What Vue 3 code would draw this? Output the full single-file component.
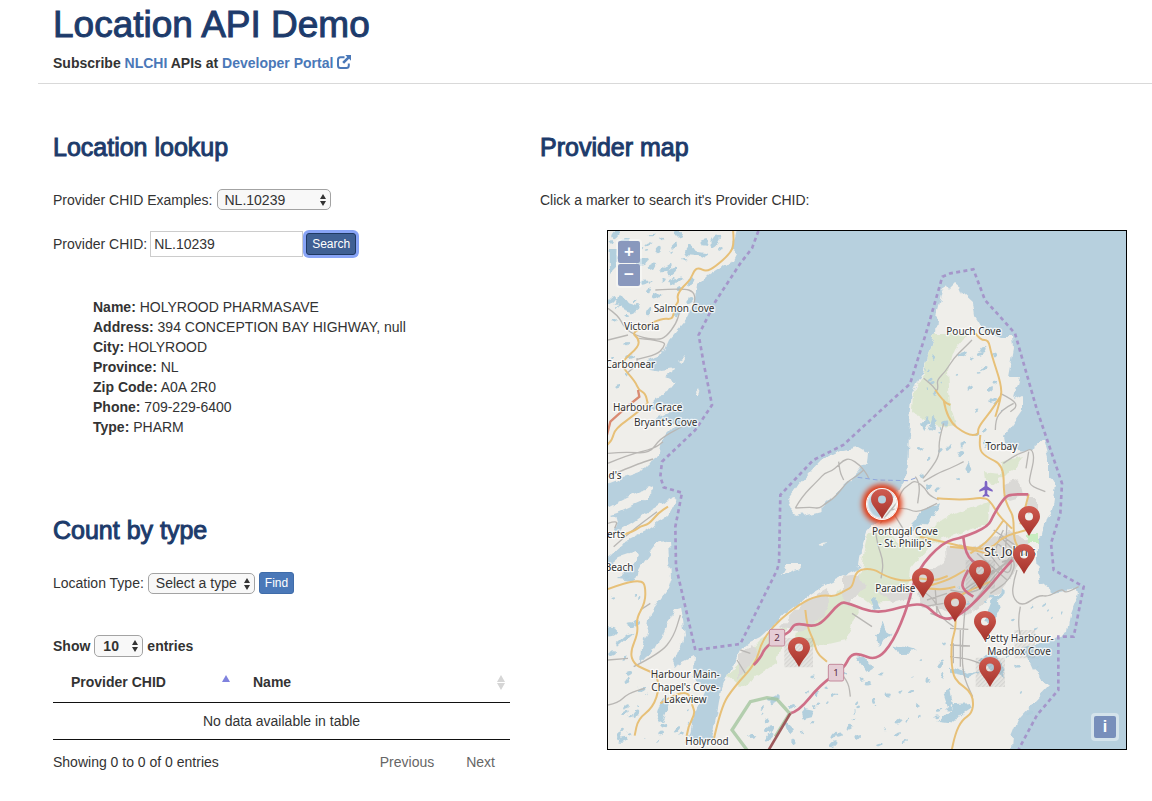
<script setup>
import { ref } from 'vue'

const example = ref('NL.10239')
const chid = ref('NL.10239')
const locationType = ref('Select a type')
const pageSize = ref('10')

const details = [
  ['Name', 'HOLYROOD PHARMASAVE'],
  ['Address', '394 CONCEPTION BAY HIGHWAY, null'],
  ['City', 'HOLYROOD'],
  ['Province', 'NL'],
  ['Zip Code', 'A0A 2R0'],
  ['Phone', '709-229-6400'],
  ['Type', 'PHARM'],
]

// Marker tips, in map units of a 518 x 518 view.
const markers = [
  { x: 274, y: 288, active: true },
  { x: 421, y: 305 },
  { x: 416, y: 343 },
  { x: 372, y: 359 },
  { x: 315, y: 367 },
  { x: 347, y: 391 },
  { x: 377, y: 410 },
  { x: 382, y: 456 },
  { x: 191, y: 436 },
]
const markerStyle = (m) => ({ left: (m.x / 518) * 100 + '%', top: (m.y / 518) * 100 + '%' })

const labels = [
  { x: 231, y: 247, t: 'Salmon Cove' },
  { x: 104, y: 301, t: 'Victoria' },
  { x: 70, y: 414, t: 'Carbonear' },
  { x: 122, y: 543, t: 'Harbour Grace' },
  { x: 176, y: 588, t: "Bryant's Cove" },
  { x: 24, y: 746, t: "d's" },
  { x: 27, y: 924, t: 'erts' },
  { x: 36, y: 1024, t: 'Beach' },
  { x: 235, y: 1344, t: 'Harbour Main-' },
  { x: 235, y: 1382, t: "Chapel's Cove-" },
  { x: 235, y: 1420, t: 'Lakeview' },
  { x: 300, y: 1544, t: 'Holyrood' },
  { x: 1100, y: 315, t: 'Pouch Cove' },
  { x: 1183, y: 660, t: 'Torbay' },
  { x: 894, y: 914, t: 'Portugal Cove' },
  { x: 894, y: 952, t: "- St. Philip's" },
  { x: 865, y: 1087, t: 'Paradise' },
  { x: 1236, y: 1236, t: 'Petty Harbour-' },
  { x: 1236, y: 1274, t: 'Maddox Cove' },
]

// Rounds the corners of polylines written with M, L, l, h and v commands.
function smooth(d) {
  const tokens = d.match(/[MLlhv]|-?\d+/g)
  const lines = []
  let cmd = 'M'
  let x = 0
  let y = 0
  for (let i = 0; i < tokens.length; ) {
    if (/[a-z]/i.test(tokens[i])) cmd = tokens[i++]
    if (cmd === 'h') x += +tokens[i++]
    else if (cmd === 'v') y += +tokens[i++]
    else if (cmd === 'l') {
      x += +tokens[i++]
      y += +tokens[i++]
    } else {
      x = +tokens[i++]
      y = +tokens[i++]
    }
    if (cmd === 'M') {
      lines.push([])
      cmd = 'l'
    }
    lines[lines.length - 1].push([x, y])
    if (cmd === 'h' || cmd === 'v') cmd = /[a-z]/i.test(tokens[i] || 'M') ? cmd : 'l'
  }
  return lines
    .map((p) => {
      let out = `M${p[0]}`
      for (let i = 1; i < p.length - 1; i++) {
        out += `Q${p[i]} ${(p[i][0] + p[i + 1][0]) / 2},${(p[i][1] + p[i + 1][1]) / 2}`
      }
      return out + `L${p[p.length - 1]}`
    })
    .join('')
}

const minorRoads = smooth(
  'M3 235l30 20 20 40 40 25 60 10 25 -10 30 -40 10 -35M145 180l85 -5 30 10 5 25 -10 25M3 330l60 -15M95 325l80 8 -5 20 -20 20 -60 15M60 430l30 -25 0 -20' +
  'M3 670l50 -5 75 6 30 -45 65 -35M3 700l60 -25 80 -20 25 -20M3 740l80 -35 55 -18M3 880l30 -10 -10 25M20 950l50 -45 80 -60' +
  'M3 1290l60 -5M3 1425l30 -5 30 -30 50 -15M80 1310l80 -40 40 -50 20 -65M100 1140l30 -20M390 1290l25 40M400 1260l30 10' +
  'M565 834l20 -35 50 -50 18 -20 20 -5 20 -17 15 -15 20 -7 30 20 20 25 7 15M565 834l50 -3 20 5 20 -15 30 -20 35 -45 25 -15 24 -20M695 695l3 30 12 25' +
  'M950 445l25 20 15 20 3 -15 -3 -20 25 -25 25 -40 30 -30 25 -25' +
  'M820 880l30 -40 20 -20 15 -40 20 -15 20 -15 30 25 10 20 30 15M925 740l15 20 -8 60M850 840l40 -10 40 20 60 -30M860 850l30 50 15 20M950 755l40 -25 40 -15 40 -20M1010 580l-15 50 3 45 -25 40 -25 30M805 900l5 40 20 55 -8 50' +
  'M1180 490l40 20 10 20 -20 15M1165 600l0 -30 20 -30 35 -20M1189 700l35 -25 30 -10 20 -10 8 30 -12 50 -5 30 50 20M1265 665l-8 50' +
  'M1189 900l-30 60 20 30M1170 940l60 40 -20 70 -60 40M1140 960l60 90 20 -60 -50 10 90 -30M1110 970l90 80M1060 1100l160 -120M1030 1080l80 20 50 -80M1080 1140l130 -160M1160 1020l-90 60M1130 1050l110 -80M1180 920l60 60M1200 880l-5 90M1160 900l70 50' +
  'M1230 1020l-10 30 -5 50 30 30 50 -35 30 5 40 -25 10 15 40 -20M1240 1130l-8 40 10 60M1075 1130l-8 80 -2 120 32 70M1029 1195l55 3M1060 1200l0 110M1029 1245l60 3M1029 1280l50 5 40 15' +
  'M940 1080l40 20 20 60 40 30M960 1110l60 -20M970 1150l60 20M710 1340l15 20 5 40M735 1150l60 40M1039 1240l0 60M950 1130l60 -10M985 1080l5 70'
)
const mainRoads = smooth(
  'M378 0l4 40 -12 30 -45 40 -28 15 -22 -12 -13 7 -12 30 -22 20 -18 25 5 20 -10 10 -5 25 -5 18 -30 -3 -55 25 -35 20 20 15 0 25 -45 40 -5 20 40 45 10 25 20 10 7 30M122 520l-32 30 -65 45 -10 35 -15 15' +
  'M50 914l30 -10 20 -15 25 -6 30 -35 28 -18M3 1077l55 -20 45 -5 12 15 0 50 -28 50 7 40 -25 60 12 35 30 15 35 15 12 40 -20 60 -45 35 -10 50M160 1420l40 -25 45 -10 10 40 10 25 -22 40 -7 50' +
  'M320 1530l22 -100 40 -60 65 -70 15 -60 35 -50 50 -45 60 -40 45 -10 30 5 35 -20 20 -10 10 -50 50 -5 40 25 60 15 35 -12 50 10 40 -15' +
  'M595 1140l5 50 20 40 10 40 30 25M985 480l25 35 20 10M1010 510l10 60 60 45 35 0 -3 -22 40 -50 28 -43' +
  'M1105 310l15 20 25 0 7 40 33 100 -5 40 -15 50M1120 615l-5 40 20 25 55 25 0 90 15 40 15 25 0 70 20 30M990 805l70 6 75 -10 20 20 20 35 20 20 20 20M938 920l70 15 60 15 80 10 40 -40 70 -20M1265 793l-10 40 -15 50M1029 950l60 5 60 20M1030 1110l60 -30 60 -25' +
  'M1045 1160l3 30 -16 50 3 90 20 30 30 20 15 30 -5 40 -30 20 -20 40 -15 70M955 1075l50 5 40 -10M955 1070l60 -15 60 -35M1190 870l-40 60 -60 40'
)
const motorways = smooth(
  'M440 1305L460 1285L475 1250L534 1212L549 1205L564 1178L619 1190L649 1175L699 1116L724 1120L809 1152L904 1125L954 1122L989 1158L1029 1170L1079 1140L1139 1080L1180 1030L1216 990' +
  'M549 1450L574 1445L639 1365L711 1315L729 1276L754 1270L809 1292L859 1235L904 1125L929 1021L1009 935L1069 922L1144 890L1159 855L1194 800L1215 793L1264 793' +
  'M1069 922L1074 975L1119 1010M1084 1020L1064 1055L1069 1080L1099 1100'
)

let seed = 11
const rnd = () => (seed = (seed * 16807) % 2147483647) / 2147483647
// Regions where ponds are scattered: x, y, width, height, count, size.
const regions = [
  [10, 10, 330, 60, 22, 11], [10, 60, 240, 190, 30, 13], [10, 250, 60, 240, 8, 9],
  [10, 1040, 90, 500, 22, 12], [100, 1360, 160, 190, 14, 9], [410, 1400, 100, 130, 10, 13],
  [540, 1310, 220, 240, 22, 9], [740, 1240, 290, 310, 30, 8], [1180, 1130, 150, 330, 12, 8],
  [930, 560, 130, 260, 14, 10], [1040, 330, 150, 240, 16, 11], [1040, 560, 120, 120, 8, 10],
  [1010, 1060, 160, 80, 7, 8], [1260, 1110, 120, 90, 5, 7], [950, 380, 90, 120, 8, 8],
]
const ponds = regions.flatMap(([x, y, w, h, n, s]) =>
  Array.from({ length: n }, () => {
    const cx = x + rnd() * w
    const cy = y + rnd() * h
    const r = s * (0.35 + rnd())
    return { cx, cy, rx: r, ry: r * 0.55, a: `rotate(${-60 + rnd() * 60} ${cx} ${cy})` }
  })
)
</script>

<template>
  <div class="page">
    <header class="masthead">
      <h1>Location API Demo</h1>
      <p>
        Subscribe <a href="#">NLCHI</a> APIs at
        <a href="#">Developer Portal
          <svg class="ext" viewBox="0 0 14 14" aria-hidden="true">
            <path d="M7.5 2.200H3.500Q1 2.200 1 4.700V10.500Q1 13 3.500 13H9.300Q11.800 13 11.800 10.500V8.500" fill="none" stroke="currentColor" stroke-width="2" />
            <path d="M8.300 0H14v5.700l-1.900-1.900-5 5-1.900-1.900 5-5z" fill="currentColor" />
          </svg>
        </a>
      </p>
    </header>

    <div class="columns">
      <div class="left">
        <section class="lookup">
          <h2>Location lookup</h2>
          <div class="line">
            <label for="ex">Provider CHID Examples:</label>
            <span class="pick wide">
              <select id="ex" v-model="example"><option>NL.10239</option></select>
              <svg viewBox="0 0 8 14" aria-hidden="true"><path d="M4 1l3 5H1zM4 13l3-5H1z" /></svg>
            </span>
          </div>
          <form class="line search" @submit.prevent>
            <label for="chid">Provider CHID:</label>
            <input id="chid" v-model="chid" type="text" />
            <button class="btn focused" type="submit">Search</button>
          </form>
          <ul class="details">
            <li v-for="d in details" :key="d[0]"><b>{{ d[0] }}:</b> {{ d[1] }}</li>
          </ul>
        </section>

        <section>
          <h2>Count by type</h2>
          <form class="line type" @submit.prevent>
            <label for="lt">Location Type:</label>
            <span class="pick medium">
              <select id="lt" v-model="locationType"><option>Select a type</option></select>
              <svg viewBox="0 0 8 14" aria-hidden="true"><path d="M4 1l3 5H1zM4 13l3-5H1z" /></svg>
            </span>
            <button class="btn" type="submit">Find</button>
          </form>
          <div class="line show">
            <label for="size">Show</label>
            <span class="pick small">
              <select id="size" v-model="pageSize"><option>10</option></select>
              <svg viewBox="0 0 8 14" aria-hidden="true"><path d="M4 1l3 5H1zM4 13l3-5H1z" /></svg>
            </span>
            <span>entries</span>
          </div>
          <table>
            <thead>
              <tr>
                <th class="first"><span class="th">Provider CHID
                  <svg class="sort" viewBox="0 0 10 16" aria-hidden="true"><path d="M5 1l4 7H1z" fill="#7f82de" /></svg></span></th>
                <th><span class="th">Name
                  <svg class="sort" viewBox="0 0 10 16" aria-hidden="true"><path d="M5 1l4 7H1zM5 16l4-7H1z" fill="#d6d6d6" /></svg></span></th>
              </tr>
            </thead>
            <tbody><tr><td colspan="2">No data available in table</td></tr></tbody>
          </table>
          <div class="foot">
            <span>Showing 0 to 0 of 0 entries</span>
            <nav><button type="button">Previous</button><button type="button">Next</button></nav>
          </div>
        </section>
      </div>

      <section class="right">
        <h2>Provider map</h2>
        <p class="hint">Click a marker to search it's Provider CHID:</p>
        <div class="map">
          <svg class="canvas" viewBox="3 3 1554 1554" role="img" aria-label="Map of the Avalon Peninsula">
            <defs>
              <filter id="rough" filterUnits="userSpaceOnUse" x="-60" y="-60" width="1680" height="1680">
                <feTurbulence type="fractalNoise" baseFrequency="0.03" numOctaves="2" seed="4" result="n" />
                <feDisplacementMap in="SourceGraphic" in2="n" scale="26" xChannelSelector="R" yChannelSelector="G" />
              </filter>
              <pattern id="hatch" width="9" height="9" patternUnits="userSpaceOnUse" patternTransform="rotate(45)">
                <rect width="9" height="9" fill="#8a8a8a" opacity=".08" />
                <rect width="4" height="9" fill="#8a8a8a" opacity=".2" />
              </pattern>
            </defs>
            <rect width="1560" height="1560" fill="#b7d0de" />
            <g filter="url(#rough)">
              <g transform="scale(3) translate(-607 -230)">
                <g fill="#efeeea">
                  <path d="M590 215H741L735 238L732 250L738 254L735 260L727 266L722 265L707 275L697 285L695 298L692 308L687 318L674 333L667 341L663 350L659 357L650 360L639 363L646 367L661 370L675 368L673 373L665 377L676 382L667 393L657 397L647 408L652 410L683 403L672 411L660 417L650 424L665 420L676 424L668 432L662 440L660 452L654 460L648 464L640 472L622 478L590 490Z" />
                  <path d="M590 513L607 507L627 497L640 491L655 486L655 490L640 503L620 512L611 515L619 521L614 533L622 529L634 522L645 514L657 507L667 500L674 497L676 502L669 515L657 523L644 532L624 542L610 555L590 569L607 568L620 557L635 552L637 555L630 567L617 580L632 582L644 560L657 543L669 540L670 560L671 577L667 590L650 613L647 632L641 648L640 663L647 655L655 650L663 636L669 623L674 610L681 608L683 620L685 637L679 653L672 667L684 661L694 656L693 670L690 680L707 688L695 713L689 737L700 745L710 743L713 730L717 713L721 690L727 675L740 650L750 642L760 637L787 613L800 603L814 592L829 583L845 575L860 567L862 550L868 533L877 523L882 510L893 497L900 483L906 479L908 450L911 410L913 393L918 382L923 373L927 357L935 333L937 310L942 290L947 283L950 288L955 283L960 287L963 294L973 303L975 317L983 330L1000 337L1012 337L1013 350L1008 377L1020 377L1014 399L1022 395L1022 410L1013 423L1003 437L1005 448L1030 450L1043 440L1048 457L1048 477L1056 483L1053 507L1047 520L1043 537L1037 541L1037 560L1038 573L1040 583L1053 593L1077 589L1078 595L1071 613L1068 633L1053 637L1040 646L1023 648L1033 670L1050 685L1033 703L1020 717L1012 737L1010 765H590Z" />
                  <path d="M787 500L800 483L820 461L840 451L858 447L867 452L866 463L858 473L840 490L820 510L797 516L790 508Z" />
                  <path d="M818 546L827 543L825 547ZM782 574L788 563L800 563L801 568ZM679 360L685 356L682 362ZM695 395L700 389L698 395Z" />
                </g>
                <g fill="#dce6cf">
                  <path d="M935 333L968 333L952 355L948 370L950 405L955 425L940 428L913 412L914 393L924 373L927 357Z" />
                  <path d="M864 555L869 535L885 530L900 545L940 520L990 500L988 523L930 545L910 570L905 600L870 605L850 590L862 570Z" />
                  <path d="M812 610L840 590L858 612L846 640L812 648L795 640ZM727 675L760 640L787 625L778 662L740 687ZM1000 462L1023 456L1015 470L1000 478ZM984 472L1000 474L1000 484L985 482Z" />
                </g>
                <g fill="#dad9d6">
                  <path d="M781 625L800 605L828 588L829 605L812 628L795 632ZM843 576L860 574L866 585L850 605L843 596ZM738 655L752 645L758 655L745 670L738 680ZM880 590L905 585L912 600L890 604Z" />
                  <path d="M915 572L940 565L960 550L990 540L1010 530L1030 540L1020 565L1000 590L965 615L945 610L920 605ZM1003 485L1020 480L1023 495L1005 500ZM1025 497L1037 497L1037 510L1028 515ZM945 545L965 545L962 560L946 566Z" />
                </g>
                <path d="M1028 534L1038 534L1038 543L1028 543Z" fill="#c8ecc0" />
              </g>
              <g fill="#b2cfdd">
                <ellipse v-for="(p, i) in ponds" :key="i" :cx="p.cx" :cy="p.cy" :rx="p.rx" :ry="p.ry" :transform="p.a" />
                <path d="M235 75l20-30 15 20 30 5-20 12-38-3zM30 230l15-30 15 20 25 8-18 16zM5 60h25l-4 55-20 20z" />
                <path d="M804 1218l16-24 6-16 10 22 16 10-26 22-10 20zM860 1243l70 20-20 8-35 1zM750 1283l30-3 15 30-20 12zM582 1446l10-12 30 6-8 22-26 6zM534 1484l12-4 18 18-20 20z" />
                <path d="M1029 1423l55-3 8 15-25 16-25 30-45-5 40-40zM1029 1375l-20 10 15 45h15zM1135 1170l22-60 25-35 12 10-20 25 8 35-27 30zM1029 1310l55 18 40-8-40 20-55-12zM1110 1290l60-30 18 88z" />
                <path d="M945 585l15-25 10 15-15 28zM965 600l12-40 12 8-10 36zM910 900l30-60 60-20-20 38-45 40zM790 1110l18-12 12 35-20 8zM1075 720l10-22 8 20-8 18z" />
                <path d="M160 1430l15-30 10 20-20 55-20 5zM25 1240l35-30 20-5-50 45z" />
              </g>
            </g>

            <path :d="minorRoads" fill="none" stroke="#b9b7b4" stroke-width="4" />
            <path :d="mainRoads" fill="none" stroke="#e7c078" stroke-width="6" stroke-linejoin="round" />
            <path d="M93 480l4 20-37 30-50 45-10 40" fill="none" stroke="#d98a72" stroke-width="7" />
            <path :d="motorways" fill="none" stroke="#cf6f88" stroke-width="8" stroke-linejoin="round" />
            <path d="M420 1560l-45-60 55-85 50-12 30 5 38 42-43 70" fill="none" stroke="#9fc39a" stroke-width="10" opacity=".75" />
            <path d="M485 1560l65-110" fill="none" stroke="#9d5a5c" stroke-width="8" />
            <path d="M752 742l60 8 90 2 30-10" fill="none" stroke="#8fa7dd" stroke-width="3" stroke-dasharray="14 9" />
            <path d="M454 3L435 55L400 100L325 215L275 315L290 400L315 525L265 600L165 695L160 740L170 772L225 788L205 890L207 1010L265 1260L400 1242L510 1020L516 1000L520 795L619 690L709 645L855 510L909 462L960 300L1006 140L1030 130L1099 118L1134 210L1224 310L1290 540L1365 760L1360 850L1332 940L1340 1020L1430 1070L1400 1220H1354V1380L1290 1455L1234 1560" fill="none" stroke="#a596ca" stroke-width="8" stroke-dasharray="12 10" />
            <path d="M1222 1200h62v85h-62zM1106 1283h88v88h-88zM532 1224h86v88h-86zM1076 990h88v86h-88z" fill="url(#hatch)" />
            <path d="M1137 752c3 0 4 4 4 8v9l16 11v5l-16-5v12l6 5v4l-10-3-10 3v-4l6-5v-12l-16 5v-5l16-11v-9c0-4 1-8 4-8z" fill="#7c63c4" />
            <g class="shields">
              <rect x="487" y="1198" width="46" height="50" rx="5" />
              <rect x="664" y="1303" width="46" height="50" rx="5" />
              <text x="510" y="1234">2</text><text x="687" y="1339">1</text>
            </g>
            <text v-for="l in labels" :key="l.t" class="place" :x="l.x" :y="l.y">{{ l.t }}</text>
            <text class="place city" x="1209" y="977">St. John's</text>
          </svg>

          <button v-for="(m, i) in markers" :key="i" type="button" class="marker" :class="{ active: m.active }" :style="markerStyle(m)" :aria-label="'Provider ' + (i + 1)">
            <svg viewBox="0 0 22 30" aria-hidden="true">
              <defs><linearGradient :id="'pin' + i" x2="0" y2="1"><stop offset="0" stop-color="#cf5b50" /><stop offset="1" stop-color="#a5322b" /></linearGradient></defs>
              <path :fill="'url(#pin' + i + ')'" fill-rule="evenodd" d="M11 0C17 0 22 4.500 22 10.500C22 16 17 19 11 30C5 19 0 16 0 10.500C0 4.500 5 0 11 0zM11 6.500a4 4 0 1 0 0 8a4 4 0 1 0 0-8z" />
            </svg>
          </button>

          <div class="zoom">
            <button type="button" aria-label="Zoom in">+</button>
            <button type="button" aria-label="Zoom out">−</button>
          </div>
          <div class="info"><button type="button" aria-label="Attributions">i</button></div>
        </div>
      </section>
    </div>
  </div>
</template>

<style>
body { margin: 0; background: #fff; }
</style>

<style scoped>
* { box-sizing: border-box; }
.page { margin-left: 38px; font: 14px/20px "Liberation Sans", Arial, sans-serif; color: #333; }
button, input, select { font: inherit; color: inherit; }
h1, h2 { margin: 0; font-weight: 400; color: #1d3b6b; -webkit-text-stroke: 1px #1d3b6b; }
h1 { font-size: 37px; line-height: 40px; }
h2 { font-size: 25px; line-height: 28px; }
p { margin: 0; }
a { color: #4a78b8; text-decoration: none; }
.masthead { padding: 5px 15px 10px; border-bottom: 1px solid #d9d9d9; }
.masthead p { margin-top: 8px; font-weight: 700; }
.ext { width: 14px; height: 14px; vertical-align: -1px; }
.columns { display: grid; grid-template-columns: 487px minmax(0, 1fr); padding-top: 49px; }
.left { padding: 0 15px; }
.right { padding-left: 15px; }
.line { display: flex; align-items: center; gap: 4px; }
.lookup { height: 383px; }
.lookup h2 { margin-bottom: 28px; }
.pick { position: relative; display: inline-block; }
.pick select { display: block; width: 100%; height: 21px; padding: 0 0 0 7px; border: 1px solid #a3a3a3; border-radius: 5px; background: #f8f8f8; appearance: none; line-height: 18px; }
.pick svg { position: absolute; right: 4px; top: 4px; width: 8px; height: 14px; fill: #333; pointer-events: none; }
.wide { width: 114px; }
.medium { width: 107px; }
.small { width: 49px; }
.small select { height: 22px; padding-left: 8px; font-weight: 700; }
.search { margin-top: 21px; gap: 3px; }
.search input { width: 153px; height: 26px; padding: 0 3px; border: 1px solid #ccc; border-radius: 0; outline: 0; background: #fff; }
.btn { height: 22px; padding: 0 5px; border: 1px solid #3f6ca9; border-radius: 3px; background: #4a78b8; color: #fff; font-size: 12px; line-height: 18px; }
.btn.focused { background: #3f6094; border-color: #1f3962; box-shadow: 0 0 0 3px #88a4f6; }
.details { list-style: none; margin: 40px 0 0; padding: 0 0 0 40px; }
.type { margin-top: 28px; }
.show { margin-top: 41px; font-weight: 700; }
table { width: 100%; margin-top: 5px; border-collapse: separate; border-spacing: 0; }
th { padding: 10px 4px 10px 18px; border-bottom: 1px solid #111; text-align: left; }
th.first { width: 182px; }
.th { display: flex; justify-content: space-between; align-items: center; }
.sort { width: 10px; height: 16px; }
td { padding: 8px 10px; border-bottom: 1px solid #111; text-align: center; }
.foot { display: flex; justify-content: space-between; align-items: center; margin-top: 12px; }
.foot nav { display: flex; gap: 2px; }
.foot nav button { padding: 0 15px; border: 0; background: none; color: #666; }
.hint { margin-top: 29px; }
.map { position: relative; max-width: 520px; aspect-ratio: 1; margin: 20px 0 0 67px; border: 1px solid #000; overflow: hidden; }
.canvas { display: block; width: 100%; height: 100%; }
.place { font: 30px "Noto Sans", sans-serif; fill: #333; stroke: #fff; stroke-opacity: .75; stroke-width: 8px; paint-order: stroke; stroke-linejoin: round; text-anchor: middle; }
.city { font-size: 37px; }
.shields rect { fill: #e5cdd5; stroke: #c58a9c; stroke-width: 3px; }
.shields text { font: 29px "Noto Sans", sans-serif; fill: #5c2f45; text-anchor: middle; }
.marker { position: absolute; width: 22px; height: 30px; margin: -30px 0 0 -11px; padding: 0; border: 0; background: none; }
.marker svg { position: relative; display: block; width: 22px; height: 30px; }
.active::before { content: ""; position: absolute; left: -4px; top: 0; width: 30px; height: 30px; border-radius: 50%; box-shadow: 0 0 0 1px #fff, 0 0 5px 5px #e0401c, inset 0 0 2px 1px #fff; }
.zoom { position: absolute; left: 8px; top: 8px; display: grid; gap: 1px; padding: 2px; border-radius: 4px; background: rgba(255, 255, 255, .4); }
.zoom button { width: 22px; height: 22px; padding: 0; border: 0; border-radius: 2px; background: #8998bd; color: #fff; font-size: 17px; font-weight: 700; line-height: 22px; }
.info { position: absolute; right: 7px; bottom: 8px; padding: 3px; border-radius: 4px; background: rgba(255, 255, 255, .4); }
.info button { display: block; width: 22px; height: 22px; padding: 0; border: 0; border-radius: 2px; background: #788fbb; color: #fff; font-size: 16px; font-weight: 700; line-height: 22px; }
</style>
